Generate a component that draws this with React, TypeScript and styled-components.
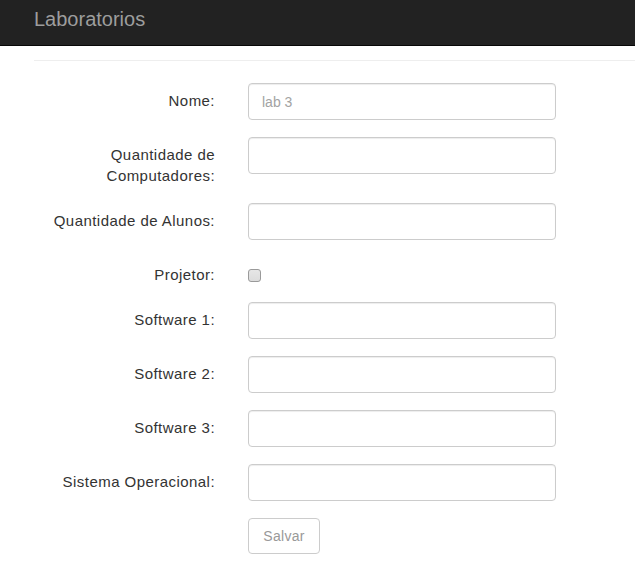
import React from "react";
import styled, { createGlobalStyle } from "styled-components";

const Global = createGlobalStyle`
  html, body { margin: 0; padding: 0; background: #fff; }
  body { font-family: "Liberation Sans", Arial, sans-serif; font-size: 14px; color: #333; }
  * { box-sizing: border-box; }
`;

const Navbar = styled.div`
  height: 46px;
  background: #222;
  border-bottom: 1px solid #080808;
  padding-left: 34px;
`;

const Brand = styled.div`
  font-size: 20px;
  line-height: 22px;
  padding-top: 8px;
  color: #9d9d9d;
`;

const Rule = styled.hr`
  margin: 14px 0 0 34px;
  border: 0;
  border-top: 1px solid #eee;
  height: 0;
`;

const Form = styled.form`
  margin: 22px 0 0 33px;
  display: grid;
  grid-template-columns: 182px 308px;
  column-gap: 33px;
  row-gap: 17px;
  align-items: start;
`;

const Label = styled.label`
  text-align: right;
  padding-top: 7px;
  font-size: 15px;
  line-height: 21px;
  letter-spacing: 0.45px;
  color: #333;
`;

const Input = styled.input`
  height: 37px;
  width: 308px;
  padding: 0 13px;
  border: 1px solid #ccc;
  border-radius: 4px;
  box-shadow: inset 0 1px 1px rgba(0, 0, 0, 0.075);
  font-family: "Liberation Sans", Arial, sans-serif;
  font-size: 14px;
  color: #555;
  outline: none;
  &::placeholder { color: #a3a3a3; }
`;

const CheckCell = styled.div`
  height: 28px;
  padding-top: 12px;
`;

const Check = styled.input`
  appearance: none;
  -webkit-appearance: none;
  display: block;
  margin: 0;
  width: 13px;
  height: 13px;
  border: 1px solid #9a9a9a;
  border-radius: 3px;
  background: linear-gradient(#e6e6e6, #dcdcdc);
`;

const Button = styled.button`
  grid-column: 2;
  justify-self: start;
  width: 72px;
  height: 36px;
  border: 1px solid #ccc;
  border-radius: 4px;
  background: #fff;
  color: #999;
  font-family: "Liberation Sans", Arial, sans-serif;
  font-size: 14px;
  letter-spacing: 0.3px;
`;

const fields: { label: string; placeholder?: string }[] = [
  { label: "Nome:", placeholder: "lab 3" },
  { label: "Quantidade de Computadores:" },
  { label: "Quantidade de Alunos:" },
];

const fields2 = ["Software 1:", "Software 2:", "Software 3:", "Sistema Operacional:"];

export default function App() {
  return (
    <>
      <Global />
      <Navbar>
        <Brand>Laboratorios</Brand>
      </Navbar>
      <Rule />
      <Form onSubmit={(e) => e.preventDefault()}>
        {fields.map((f) => (
          <React.Fragment key={f.label}>
            <Label>{f.label}</Label>
            <Input type="text" placeholder={f.placeholder} />
          </React.Fragment>
        ))}
        <Label>Projetor:</Label>
        <CheckCell>
          <Check type="checkbox" />
        </CheckCell>
        {fields2.map((l) => (
          <React.Fragment key={l}>
            <Label>{l}</Label>
            <Input type="text" />
          </React.Fragment>
        ))}
        <Button type="submit">Salvar</Button>
      </Form>
    </>
  );
}
